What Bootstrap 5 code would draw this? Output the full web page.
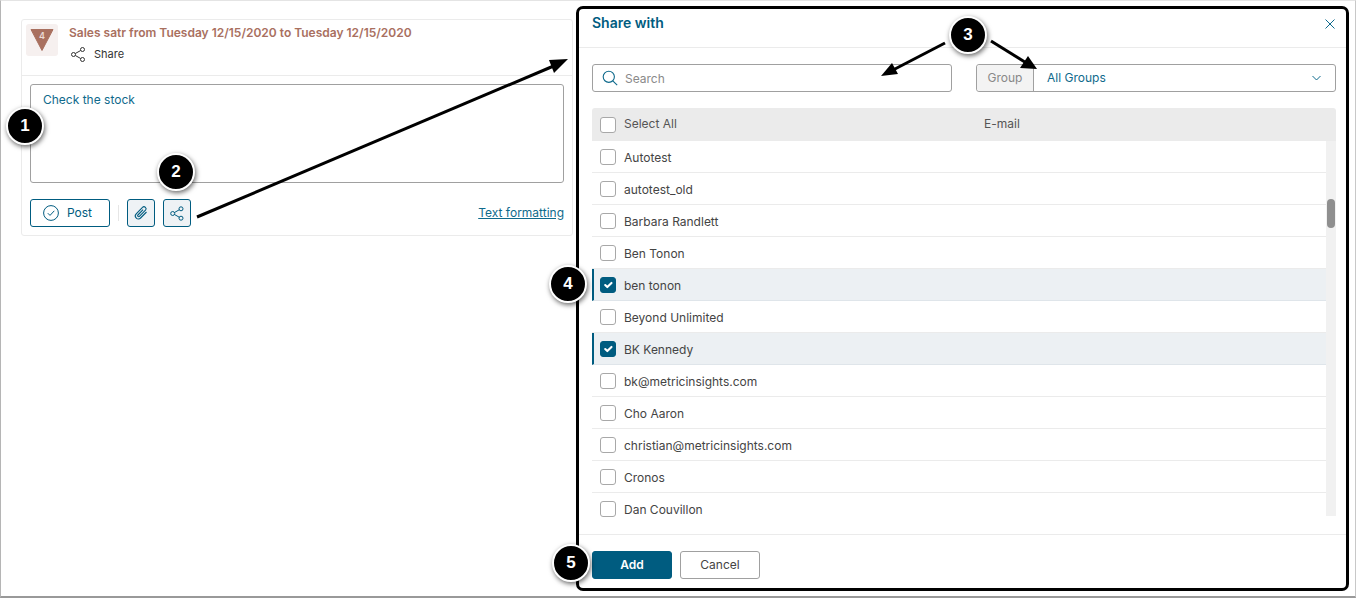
<!DOCTYPE html>
<html lang="en">
<head>
<meta charset="utf-8">
<title>Share with</title>
<link rel="stylesheet" href="https://cdn.jsdelivr.net/npm/bootstrap@5.3.0/dist/css/bootstrap.min.css">
<style>
html,body{height:600px;overflow:hidden;background:#fff}
body{font-family:Inter,"Liberation Sans",sans-serif;font-size:12px;color:#444;position:relative}
.shot{width:1356px;height:598px;border-left:1px solid #b5b5b5;border-top:1px solid #e4e4e4;border-right:1px solid #c8c8c8;border-bottom:2px solid #999;gap:3px;padding:5px 0 0 20px}
.leftcol{width:552px;padding-top:13px}
.feed{height:217px;border:1px solid #ebebeb;border-radius:3px}
.feedhead{height:56px;padding:0 4px;border-bottom:1px solid #ebebeb;gap:11px}
.metric{width:32px;height:32px;background:#f6f0ef;border-radius:3px;margin-top:4px;flex:none}
.ftitle{color:#a9705f;font-weight:600;font-size:12px;margin-top:5px;line-height:15px}
.sharelink{color:#333;font-size:11px;gap:9px;margin-top:6px;margin-left:2px}
.notearea{height:99px;margin:8px 8px 0;border:1px solid #a0a0a0;border-radius:3px;padding:6px 12px;color:#0f6a8c;font-size:12px}
.feedfoot{padding:0 8px;margin-top:16px}
.postbtn{width:80px;height:28px;border:1px solid #005c80;border-radius:3px;background:#fff;color:#005c80;gap:8px;font-size:12px;padding:0 5px 0 0}
.sep{width:1px;height:16px;background:#e6e6e6;margin:0 8px}
.iconbtn{width:28px;height:28px;border:1px solid #005c80;border-radius:3px;background:#eef2f5;padding:0;margin-right:8px}
.fmt{color:#0f6a8c;font-size:12px;text-decoration:underline}
.dlg{width:773px;height:585px;border:3px solid #000;border-radius:7px;background:#fff}
.dlghead{height:39px;border-bottom:1px solid #ebebeb;padding:0 11px 0 13px;margin-bottom:16px}
.dlgtitle{color:#005c80;font-weight:600;font-size:14px;margin-top:-11px}
.toolbar{padding:0 10px 0 13px;height:28px;margin-bottom:16px}
.searchbox{width:360px;height:28px;border:1px solid #a0a0a0;border-radius:3px;padding:0 9px;gap:7px;color:#8a8a8a;font-size:12px}
.searchbox span{padding-top:2px}
.groupbox{width:360px;height:28px;margin-left:24px;border:1px solid #a0a0a0;border-radius:3px}
.grouplabel{width:57px;background:#f3f3f3;border-right:1px solid #a0a0a0;color:#888;font-size:12px;border-radius:3px 0 0 3px}
.groupval{color:#0f6a8c;font-size:12px;padding:0 14px 0 13px}
.listwrap{margin:0 10px 0 13px}
.thead{height:33px;background:#ebebeb;border-radius:3px 3px 0 0;padding-left:8px}
.thead .lbl{width:360px;color:#555;padding-bottom:2px}
.thead .mailh{color:#555;padding-bottom:2px}
.rows{height:377px;overflow:hidden}
.rowlist{flex:1}
.urow{height:32px;border-bottom:1px solid #ebebeb;padding-left:8px;color:#444;flex:none}
.urow span{padding-top:3px}
.urow.sel{background:#ecf0f3;border-left:2px solid #005c80;padding-left:6px;border-bottom-color:#dfe5ea}
.track{width:10px;height:375px;background:#f1f1f1;padding:58px 1px 0}
.thumb{height:29px;background:#8f8f8f;border-radius:4px}
.form-check-input.cb{width:16px;height:16px;margin:0 8px 0 0;border-color:#a8a8a8;border-radius:3px;flex:none;opacity:1}
.form-check-input.cb:checked{background-color:#005c80;border-color:#005c80}
.dlgfoot{margin-top:16px;border-top:1px solid #ebebeb;padding:16px 13px 0;gap:8px}
.addbtn,.cancelbtn{width:80px;height:28px;padding:0;font-size:12px;border-radius:3px}
.addbtn{background:#005c80;border:1px solid #005c80;color:#fff;font-weight:600}
.cancelbtn{background:#fff;border:1px solid #a0a0a0;color:#444}
.closex{margin-top:-9px}
.overlay{position:absolute;left:0;top:0;pointer-events:none}
.num{position:absolute;width:38px;height:38px;border-radius:50%;background:#000;border:2px solid #fff;color:#fff;font:700 17px/34px "Liberation Sans",sans-serif;text-align:center;box-shadow:1px 2px 5px rgba(0,0,0,.6)}
.n1{left:6px;top:107px}.n2{left:157px;top:153px}.n3{left:949px;top:16px}.n4{left:549px;top:265px}.n5{left:552px;top:544px}
</style>
</head>
<body>
<div class="shot d-flex align-items-start">
  <div class="leftcol flex-none">
    <div class="feed">
      <div class="feedhead d-flex">
        <div class="metric d-flex justify-content-center">
          <svg width="26" height="24" viewBox="0 0 26 24" class="mt-1"><path d="M2 1.5h22L13 22.5z" fill="#a9705f" stroke="#a9705f" stroke-linejoin="round"/><text x="13" y="11" font-size="9" font-weight="600" fill="#ecdcd7" text-anchor="middle" font-family="Inter">4</text></svg>
        </div>
        <div>
          <div class="ftitle">Sales satr from Tuesday 12/15/2020 to Tuesday 12/15/2020</div>
          <div class="sharelink d-flex align-items-center">
            <svg width="14" height="15" viewBox="0 0 14 15" fill="none" stroke="#333"><circle cx="11.5" cy="2.5" r="2"/><circle cx="2.5" cy="7.5" r="2"/><circle cx="11.5" cy="12.5" r="2"/><path d="M4.3 6.5 9.7 3.5M4.3 8.5l5.4 3"/></svg>
            <span>Share</span>
          </div>
        </div>
      </div>
      <div class="notearea">Check the stock</div>
      <div class="feedfoot d-flex align-items-center">
        <button type="button" class="postbtn d-flex align-items-center justify-content-center">
          <svg width="16" height="16" viewBox="0 0 16 16" fill="none" stroke="#005c80"><circle cx="8" cy="8" r="7.4"/><path d="M4.8 8.2l2.2 2.2 4.3-4.6"/></svg>
          <span>Post</span>
        </button>
        <div class="sep"></div>
        <button type="button" class="iconbtn d-flex align-items-center justify-content-center">
          <svg width="16" height="16" viewBox="0 0 16 16" fill="none" stroke="#005c80" stroke-width="1.1"><path d="M13.5 7 7.6 13a3 3 0 0 1-4.4-4.2l6.3-6.4a2 2 0 0 1 3 2.8L6.4 11.4a1 1 0 0 1-1.5-1.4l5.2-5.3"/></svg>
        </button>
        <button type="button" class="iconbtn d-flex align-items-center justify-content-center">
          <svg width="14" height="15" viewBox="0 0 14 15" fill="none" stroke="#005c80"><circle cx="11" cy="2.8" r="2"/><circle cx="2.7" cy="7.5" r="2"/><circle cx="11" cy="12.2" r="2"/><path d="M4.5 6.5 9.2 3.8M4.5 8.5l4.7 2.7"/></svg>
        </button>
        <a href="#" class="fmt ms-auto">Text formatting</a>
      </div>
    </div>
  </div>

  <div class="dlg d-flex flex-column">
    <div class="dlghead d-flex align-items-center justify-content-between flex-none">
      <div class="dlgtitle">Share with</div>
      <svg class="closex" width="10" height="10" viewBox="0 0 10 10" stroke="#0f6a8c" fill="none"><path d="M.5.5l9 9M9.5.5l-9 9"/></svg>
    </div>
    <div class="toolbar d-flex">
      <div class="searchbox d-flex align-items-center">
        <svg width="16" height="16" viewBox="0 0 16 16" fill="none" stroke="#0f6a8c" stroke-width="1.1"><circle cx="6.8" cy="6.8" r="5.6"/><path d="M10.8 10.8l4.4 4.4"/></svg>
        <span>Search</span>
      </div>
      <div class="groupbox d-flex">
        <div class="grouplabel d-flex align-items-center justify-content-center">Group</div>
        <div class="groupval flex-grow-1 d-flex align-items-center justify-content-between">
          <span>All Groups</span>
          <svg width="9" height="6" viewBox="0 0 9 6" fill="none" stroke="#0f6a8c"><path d="M.5 1l4 4 4-4"/></svg>
        </div>
      </div>
    </div>
    <div class="listwrap">
      <div class="thead d-flex align-items-center">
        <input class="form-check-input cb" type="checkbox" aria-label="Select All">
        <span class="lbl">Select All</span>
        <span class="mailh">E-mail</span>
      </div>
      <div class="rows d-flex">
        <div class="rowlist d-flex flex-column">
          <div class="urow d-flex align-items-center"><input class="form-check-input cb" type="checkbox"><span>Autotest</span></div>
          <div class="urow d-flex align-items-center"><input class="form-check-input cb" type="checkbox"><span>autotest_old</span></div>
          <div class="urow d-flex align-items-center"><input class="form-check-input cb" type="checkbox"><span>Barbara Randlett</span></div>
          <div class="urow d-flex align-items-center"><input class="form-check-input cb" type="checkbox"><span>Ben Tonon</span></div>
          <div class="urow sel d-flex align-items-center"><input class="form-check-input cb" type="checkbox" checked><span>ben tonon</span></div>
          <div class="urow d-flex align-items-center"><input class="form-check-input cb" type="checkbox"><span>Beyond Unlimited</span></div>
          <div class="urow sel d-flex align-items-center"><input class="form-check-input cb" type="checkbox" checked><span>BK Kennedy</span></div>
          <div class="urow d-flex align-items-center"><input class="form-check-input cb" type="checkbox"><span>bk@metricinsights.com</span></div>
          <div class="urow d-flex align-items-center"><input class="form-check-input cb" type="checkbox"><span>Cho Aaron</span></div>
          <div class="urow d-flex align-items-center"><input class="form-check-input cb" type="checkbox"><span>christian@metricinsights.com</span></div>
          <div class="urow d-flex align-items-center"><input class="form-check-input cb" type="checkbox"><span>Cronos</span></div>
          <div class="urow d-flex align-items-center"><input class="form-check-input cb" type="checkbox"><span>Dan Couvillon</span></div>
        </div>
        <div class="track"><div class="thumb"></div></div>
      </div>
    </div>
    <div class="dlgfoot d-flex">
      <button type="button" class="addbtn">Add</button>
      <button type="button" class="cancelbtn">Cancel</button>
    </div>
  </div>
</div>

<svg class="overlay" width="1356" height="600" viewBox="0 0 1356 600" fill="none" stroke="#000" stroke-width="3">
  <path d="M197 217 556 65"/><polygon points="568,59 549,60 554,73" fill="#000" stroke="none"/>
  <path d="M945 43 893 70"/><polygon points="881,76 898,74 892,63" fill="#000" stroke="none"/>
  <path d="M991 41 1028 64"/><polygon points="1037,69 1028,56 1020,68" fill="#000" stroke="none"/>
</svg>
<div class="num n1">1</div>
<div class="num n2">2</div>
<div class="num n3">3</div>
<div class="num n4">4</div>
<div class="num n5">5</div>
</body>
</html>
